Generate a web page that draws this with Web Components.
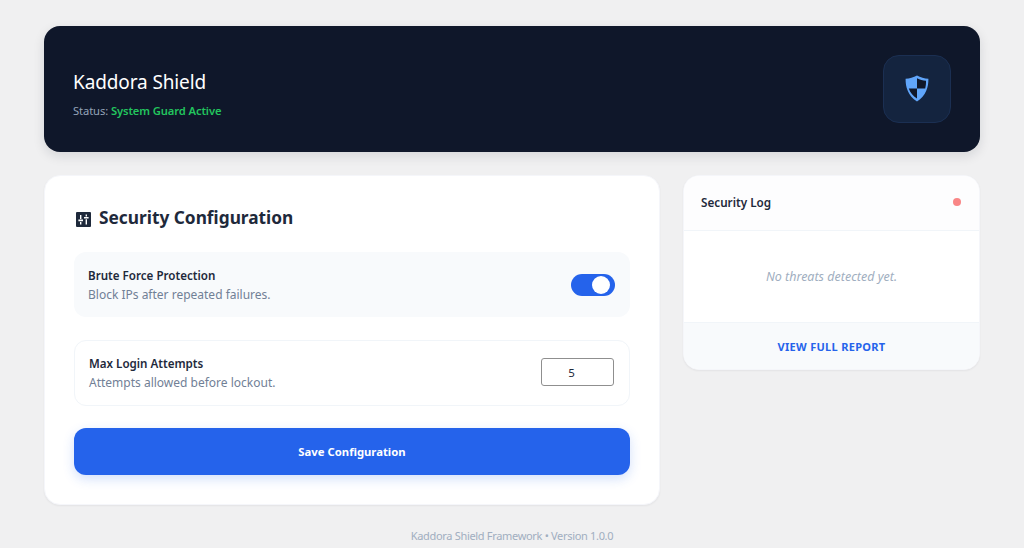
<!DOCTYPE html>
<html lang="en">
<head>
<meta charset="utf-8">
<title>Kaddora Shield</title>
<style>
  html, body { margin: 0; background: #f0f0f1; }
  body { font-family: "Noto Sans", "Open Sans", sans-serif; color: #1e293b; }
</style>
</head>
<body>
<ks-page>
  <ks-header slot="header" name="Kaddora Shield" status="System Guard Active"></ks-header>
  <ks-config slot="main" heading="Security Configuration">
    <ks-setting label="Brute Force Protection" hint="Block IPs after repeated failures." filled>
      <ks-switch></ks-switch>
    </ks-setting>
    <ks-setting label="Max Login Attempts" hint="Attempts allowed before lockout.">
      <ks-number value="5"></ks-number>
    </ks-setting>
    <ks-save>Save Configuration</ks-save>
  </ks-config>
  <ks-log slot="side" heading="Security Log" empty="No threats detected yet." link="VIEW FULL REPORT"></ks-log>
  <span slot="foot">Kaddora Shield Framework • Version 1.0.0</span>
</ks-page>

<script>
// Page frame
class KsPage extends HTMLElement {
  constructor() {
    super();
    this.attachShadow({ mode: "open" }).innerHTML = `
      <style>
        :host { display: block; padding: 26px 44px 0; height: 522px; overflow: hidden; }
        .columns {
          display: grid;
          grid-template-columns: 616px 297px;
          justify-content: space-between;
          align-items: start;
          margin-top: 23px;
        }
        footer {
          margin-top: 23px;
          text-align: center;
          font-size: 11px;
          letter-spacing: -0.32px;
          line-height: 16px;
          color: #a0aec0;
        }
      </style>
      <slot name="header"></slot>
      <div class="columns">
        <slot name="main"></slot>
        <slot name="side"></slot>
      </div>
      <footer><slot name="foot"></slot></footer>
    `;
  }
}
customElements.define("ks-page", KsPage);

// Dark banner
class KsHeader extends HTMLElement {
  constructor() {
    super();
    const name = this.getAttribute("name") || "";
    const status = this.getAttribute("status") || "";
    this.attachShadow({ mode: "open" }).innerHTML = `
      <style>
        :host {
          display: flex;
          align-items: center;
          justify-content: space-between;
          height: 126px;
          box-sizing: border-box;
          padding: 0 29px;
          background: #0f172a;
          border-radius: 16px;
          box-shadow: 0 4px 12px rgba(15, 23, 42, 0.12);
        }
        .text { padding-top: 9px; }
        h1 { margin: 0 0 8px; font-size: 19px; letter-spacing: -0.12px; line-height: 26px; font-weight: 400; color: #fff; }
        p { margin: 0; font-size: 11.2px; letter-spacing: -0.1px; line-height: 16px; color: #94a3b8; }
        b { color: #22c55e; font-weight: 600; }
        .badge {
          width: 68px;
          height: 68px;
          box-sizing: border-box;
          display: flex;
          align-items: center;
          justify-content: center;
          background: #14243f;
          border: 1px solid #1b2f52;
          border-radius: 16px;
        }
        svg { margin: 0 1px 2px 0; }
      </style>
      <div class="text">
        <h1>${name}</h1>
        <p>Status: <b>${status}</b></p>
      </div>
      <div class="badge">
        <svg width="24" height="27" viewBox="0 0 24 27">
          <path fill="#60a5fa" d="M12 0.5C8.5 2.6 4.6 3.6 0.6 3.8C0.4 12 3 21 12 26.5C21 21 23.6 12 23.4 3.8C19.4 3.6 15.5 2.6 12 0.5Z"/>
          <path fill="#0f172a" d="M12 3.2C14.8 4.6 17.9 5.5 21 5.8C21.1 8.6 20.8 11 20.2 13.4H12ZM12 13.4V23.6C7.9 20.8 5.2 17.4 3.8 13.4Z"/>
        </svg>
      </div>
    `;
  }
}
customElements.define("ks-header", KsHeader);

// Left card
class KsConfig extends HTMLElement {
  constructor() {
    super();
    const heading = this.getAttribute("heading") || "";
    this.attachShadow({ mode: "open" }).innerHTML = `
      <style>
        :host {
          display: block;
          box-sizing: border-box;
          height: 330px;
          padding: 29px;
          background: #fff;
          border: 1px solid #f5f6fa;
          border-radius: 16px;
          box-shadow: 0 1px 2px rgba(30, 41, 59, 0.06);
        }
        h2 {
          display: flex;
          align-items: center;
          gap: 8px;
          margin: 0 0 21px;
          font-size: 17.3px;
          line-height: 26px;
          font-weight: 700;
          color: #1e293b;
          padding-left: 2px;
        }
        svg { margin-top: 2px; }
        .stack { display: flex; flex-direction: column; gap: 22.5px; }
      </style>
      <h2>
        <svg width="15" height="15" viewBox="0 0 15 15">
          <rect width="15" height="15" rx="1" fill="#1e293b"/>
          <path fill="#fff" d="M4 3h1.4v4H4ZM4 10h1.4v2.5H4ZM2.4 7.6h4.6v1.6H2.4ZM9.6 2.5H11v2H9.6ZM9.6 7.2H11v5.3H9.6ZM8 5h4.6v1.6H8Z"/>
        </svg>
        ${heading}
      </h2>
      <div class="stack"><slot></slot></div>
    `;
  }
}
customElements.define("ks-config", KsConfig);

// One row of the config card
class KsSetting extends HTMLElement {
  constructor() {
    super();
    const label = this.getAttribute("label") || "";
    const hint = this.getAttribute("hint") || "";
    this.attachShadow({ mode: "open" }).innerHTML = `
      <style>
        :host {
          display: flex;
          align-items: center;
          justify-content: space-between;
          box-sizing: border-box;
          height: 66px;
          padding: 0 15px 0 14px;
          border: 1px solid #f1f5f9;
          border-radius: 12px;
        }
        :host([filled]) { height: 65px; padding: 0 15px 0 14px; background: #f8fafc; border: 0; }
        .text { padding-top: 1px; }
        strong { display: block; font-size: 11.6px; line-height: 17px; font-weight: 600; color: #1e293b; }
        span { display: block; font-size: 12px; line-height: 17px; color: #718096; margin-top: 2px; }
      </style>
      <div class="text">
        <strong>${label}</strong>
        <span>${hint}</span>
      </div>
      <slot></slot>
    `;
  }
}
customElements.define("ks-setting", KsSetting);

class KsSwitch extends HTMLElement {
  constructor() {
    super();
    this.attachShadow({ mode: "open" }).innerHTML = `
      <style>
        :host {
          display: flex;
          align-items: center;
          justify-content: flex-end;
          width: 44px;
          height: 22px;
          box-sizing: border-box;
          padding: 2px 5px;
          background: #2563eb;
          border-radius: 11px;
        }
        i { display: block; width: 18px; height: 18px; border-radius: 50%; background: #fff; }
      </style>
      <i></i>
    `;
  }
}
customElements.define("ks-switch", KsSwitch);

class KsNumber extends HTMLElement {
  constructor() {
    super();
    this.attachShadow({ mode: "open" }).innerHTML = `
      <style>
        :host {
          display: block;
          width: 73px;
          height: 28px;
          margin-bottom: 2px;
          box-sizing: border-box;
          padding-right: 12px;
          border: 1px solid #8f8f8f;
          border-radius: 3px;
          background: #fff;
          text-align: center;
          font-size: 11.5px;
          line-height: 27px;
          color: #1e293b;
        }
      </style>
      ${this.getAttribute("value") || ""}
    `;
  }
}
customElements.define("ks-number", KsNumber);

class KsSave extends HTMLElement {
  constructor() {
    super();
    this.attachShadow({ mode: "open" }).innerHTML = `
      <style>
        :host {
          display: flex;
          align-items: center;
          justify-content: center;
          height: 47px;
          background: #2563eb;
          border-radius: 12px;
          box-shadow: 0 4px 12px rgba(37, 99, 235, 0.2);
          color: #fff;
          font-size: 11.3px;
          font-weight: 700;
        }
      </style>
      <slot></slot>
    `;
  }
}
customElements.define("ks-save", KsSave);

// Right card
class KsLog extends HTMLElement {
  constructor() {
    super();
    const heading = this.getAttribute("heading") || "";
    const empty = this.getAttribute("empty") || "";
    const link = this.getAttribute("link") || "";
    this.attachShadow({ mode: "open" }).innerHTML = `
      <style>
        :host {
          display: block;
          box-sizing: border-box;
          height: 195px;
          background: #fff;
          border: 1px solid #f5f6fa;
          border-radius: 16px;
          overflow: hidden;
          box-shadow: 0 1px 2px rgba(30, 41, 59, 0.06);
        }
        header {
          display: flex;
          align-items: center;
          justify-content: space-between;
          box-sizing: border-box;
          height: 55px;
          padding: 0 18px 3px 17px;
          background: #fdfdfe;
          border-bottom: 1px solid #f1f5f9;
          font-size: 11.7px;
          font-weight: 600;
          color: #1e293b;
        }
        header i { width: 8px; height: 8px; border-radius: 50%; background: #f87171; opacity: 0.85; }
        .body {
          display: flex;
          align-items: center;
          justify-content: center;
          height: 91px;
          font-size: 12.5px;
          font-style: italic;
          color: #a0aec0;
        }
        footer {
          display: flex;
          align-items: center;
          justify-content: center;
          box-sizing: border-box;
          height: 47px;
          background: #f8fafc;
          border-top: 1px solid #f1f5f9;
          font-size: 11px;
          font-weight: 700;
          letter-spacing: 0.3px;
          color: #2563eb;
        }
      </style>
      <header>${heading}<i></i></header>
      <div class="body">${empty}</div>
      <footer>${link}</footer>
    `;
  }
}
customElements.define("ks-log", KsLog);
</script>
</body>
</html>
